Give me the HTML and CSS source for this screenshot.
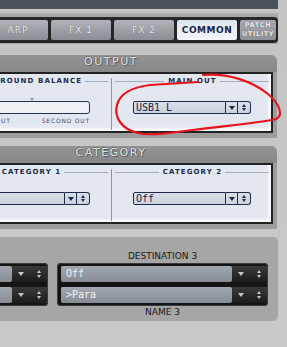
FILE: index.html
```html
<!DOCTYPE html>
<html>
<head>
<meta charset="utf-8">
<link rel="stylesheet" href="styles.css">
</head>
<body>
<div class="page">
  <div class="topbar"></div>
  <div class="tabstrip">
    <div class="tabs">
      <div class="tab">ARP</div>
      <div class="tab">FX 1</div>
      <div class="tab">FX 2</div>
      <div class="tab active">COMMON</div>
      <div class="tab util"><span>PATCH</span><span>UTILITY</span></div>
    </div>
  </div>

  <section class="frame">
    <div class="frame-head">OUTPUT</div>
    <div class="panel">
      <div class="sub sub-left">
        <div class="legend"><span>SURROUND BALANCE</span></div>
        <div class="slider"><i class="marker"></i></div>
        <div class="slider-labels"><span>FIRST OUT</span><span>SECOND OUT</span></div>
      </div>
      <div class="divider"></div>
      <div class="sub sub-right">
        <div class="legend"><span>MAIN OUT</span></div>
        <div class="select">
          <div class="select-value">USB1 L</div>
          <div class="select-btn"><i class="tri-down"></i></div>
          <div class="select-btn spin"><i class="tri-up-s"></i><i class="tri-down-s"></i></div>
        </div>
      </div>
    </div>
  </section>

  <section class="frame">
    <div class="frame-head">CATEGORY</div>
    <div class="panel">
      <div class="sub sub-left cat">
        <div class="legend"><span>CATEGORY 1</span></div>
        <div class="select">
          <div class="select-value">Off</div>
          <div class="select-btn"><i class="tri-down"></i></div>
          <div class="select-btn spin"><i class="tri-up-s"></i><i class="tri-down-s"></i></div>
        </div>
      </div>
      <div class="divider"></div>
      <div class="sub sub-right">
        <div class="legend"><span>CATEGORY 2</span></div>
        <div class="select">
          <div class="select-value">Off</div>
          <div class="select-btn"><i class="tri-down"></i></div>
          <div class="select-btn spin"><i class="tri-up-s"></i><i class="tri-down-s"></i></div>
        </div>
      </div>
    </div>
  </section>

  <section class="dest">
    <div class="dest-col">
      <div class="dest-label">DESTINATION 2</div>
      <div class="group">
        <div class="row"><div class="row-fill">Off</div><div class="row-arrow"><i class="g-down"></i></div><div class="row-spin"><i class="g-up-s"></i><i class="g-down-s"></i></div></div>
        <div class="row"><div class="row-fill">&gt;Para</div><div class="row-arrow"><i class="g-down"></i></div><div class="row-spin"><i class="g-up-s"></i><i class="g-down-s"></i></div></div>
      </div>
      <div class="dest-label">NAME 2</div>
    </div>
    <div class="dest-col">
      <div class="dest-label">DESTINATION 3</div>
      <div class="group">
        <div class="row"><div class="row-fill">Off</div><div class="row-arrow"><i class="g-down"></i></div><div class="row-spin"><i class="g-up-s"></i><i class="g-down-s"></i></div></div>
        <div class="row"><div class="row-fill">&gt;Para</div><div class="row-arrow"><i class="g-down"></i></div><div class="row-spin"><i class="g-up-s"></i><i class="g-down-s"></i></div></div>
      </div>
      <div class="dest-label">NAME 3</div>
    </div>
  </section>
</div>

<svg class="annot" width="287" height="347" viewBox="0 0 287 347">
  <path d="M203 75 C228 73 252 81 268 94 C281 105 283 116 276 119 C260 123 222 126 192 130 C170 133 150 136 138 133 C121 129 114 117 117 105 C120 93 134 87 150 85 L198 82" fill="none" stroke="#e8141a" stroke-width="2.2" stroke-linecap="round" stroke-linejoin="round"/>
</svg>
</body>
</html>
```

FILE: styles.css
```css
* { box-sizing: border-box; margin: 0; padding: 0; }
html, body { width: 287px; height: 347px; overflow: hidden; }
body {
  position: relative;
  background: linear-gradient(#c4c4c4, #c9c9c9);
  font-family: "DejaVu Sans", sans-serif;
}
.page { margin-left: -55px; width: 333px; }

.topbar { height: 9px; background: #4b5259; }
.tabstrip {
  height: 35px;
  padding-top: 8px;
  background: linear-gradient(#c8c8c8 0, #c0c0c0 4px, #a8a8a8 5px, #a6a6a6 100%);
  display: flex;
}
.tabs {
  margin-left: 40px;
  height: 26px;
  display: flex;
  gap: 3px;
  padding: 3px 2px 3px 3px;
  background: #262626;
  border-radius: 4px;
}
.tab {
  width: 60px;
  height: 20px;
  border-radius: 2px;
  background: linear-gradient(#b0b4b9, #8a8e94);
  color: #ededed;
  font-size: 9px;
  letter-spacing: 1px;
  line-height: 20px;
  text-align: center;
  text-shadow: 0 0 1px #4a4e54;
}
.tab.active {
  background: linear-gradient(#dfe5ef, #f3f6fb);
  color: #17244a;
  letter-spacing: 0.5px;
  text-shadow: none;
  font-weight: bold;
}
.tab.util {
  width: 36px;
  display: flex;
  flex-direction: column;
  align-items: center;
  justify-content: center;
  font-size: 6.5px;
  font-weight: bold;
  letter-spacing: 0.6px;
  line-height: 9px;
  background: linear-gradient(#a6aab0, #8e9298);
}

.frame {
  margin-top: 11px;
  width: 332px;
  background: #9d9d9d;
  border-radius: 0 6px 0 0;
  padding: 0 4px 5px;
}
.frame + .frame { margin-top: 8px; }
.frame-head {
  height: 17px;
  margin: 0 -4px;
  background: linear-gradient(#939393, #878787);
  border-radius: 0 6px 0 0;
  color: #e0e0e0;
  font-size: 11px;
  line-height: 13px;
  letter-spacing: 1.5px;
  text-align: center;
  text-shadow: 1px 1px 0 #5e5e5e, -1px 0 0 #747474, 0 -1px 0 #777;
}
.panel {
  height: 61px;
  border: 2px solid #222;
  background: #e3e7ef;
  box-shadow: inset -3px -3px 2px #f6f8fc;
  display: flex;
}
.sub { padding-top: 3px; }
.sub-left { width: 160px; padding-left: 21px; padding-right: 21px; }
.sub-right { width: 159px; padding-left: 21px; padding-right: 20px; }
.divider { width: 1px; margin: 4px 0 1px; background: #8c96a8; }

.legend {
  height: 8px;
  display: flex;
  align-items: center;
  margin: 0 -18px 0 -18px;
  font-size: 7px;
  font-weight: bold;
  letter-spacing: 1.1px;
  line-height: 8px;
  color: #1c2a48;
}
.legend::before, .legend::after {
  content: "";
  flex: 1;
  height: 1px;
  background: #a3acbb;
}
.legend span { padding: 0 3px 0 4px; }

.slider {
  position: relative;
  margin-top: 16px;
  height: 13px;
  border: 1px solid #24334f;
  border-radius: 3px;
  background: #eef1f6;
}
.marker {
  position: absolute;
  left: 57px;
  top: -4px;
  border-left: 2.5px solid transparent;
  border-right: 2.5px solid transparent;
  border-top: 3px solid #8a96aa;
}
.slider-labels {
  margin-top: 3px;
  display: flex;
  justify-content: space-between;
  font-size: 6px;
  letter-spacing: 0.8px;
  line-height: 8px;
  color: #3c4a66;
}

.select {
  margin-top: 16px;
  height: 13px;
  display: flex;
}
.select-value, .select-btn {
  border: 1px solid #1e2c4c;
  background: linear-gradient(#d9dee7, #cdd3dd);
}
.select-value {
  flex: 1;
  border-radius: 2px 0 0 2px;
  padding-left: 2px;
  font-family: "DejaVu Sans Mono", monospace;
  font-size: 10px;
  line-height: 11px;
  color: #17244a;
}
.select-btn {
  width: 12px;
  border-left: none;
  display: flex;
  flex-direction: column;
  align-items: center;
  justify-content: center;
}
.select-btn.spin { width: 13px; border-radius: 0 3px 3px 0; gap: 1px; }
.tri-down {
  border-left: 3.5px solid transparent;
  border-right: 3.5px solid transparent;
  border-top: 4px solid #1c2a4a;
}
.tri-up-s, .tri-down-s {
  border-left: 2.5px solid transparent;
  border-right: 2.5px solid transparent;
}
.tri-up-s { border-bottom: 3px solid #1c2a4a; }
.tri-down-s { border-top: 3px solid #1c2a4a; }

.dest {
  margin-top: 8px;
  width: 333px;
  height: 84px;
  background: #a6a6a6;
  border-radius: 0 5px 5px 0;
  padding: 14px 10px 0 0;
  display: flex;
  justify-content: flex-end;
  gap: 9px;
}
.dest-col { flex: none; width: 211px; }
.dest-label {
  height: 11px;
  font-size: 9px;
  line-height: 11px;
  text-align: center;
  color: #1a1a1a;
}
.group {
  margin: 1px 0;
  height: 43px;
  border-radius: 4px;
  background: #141414;
  padding: 3px 0 3px 4px;
  display: flex;
  flex-direction: column;
  gap: 5px;
  box-shadow: inset 0 0 0 1px #3a3a3a;
}
.row {
  height: 16px;
  display: flex;
  background: linear-gradient(#3a3a3a, #1c1c1c);
  margin-right: 1px;
}
.row-fill {
  width: 171px;
  border-radius: 2px;
  background: linear-gradient(#a2a8b0, #868c94);
  padding-left: 5px;
  font-family: "DejaVu Sans Mono", monospace;
  font-size: 10px;
  line-height: 16px;
  color: #f2f2f2;
}
.row-arrow, .row-spin {
  display: flex;
  flex-direction: column;
  align-items: center;
  justify-content: center;
}
.row-arrow { width: 18px; }
.row-spin { width: 17px; gap: 2px; }
.g-down {
  border-left: 3.5px solid transparent;
  border-right: 3.5px solid transparent;
  border-top: 4px solid #c8c8c8;
}
.g-up-s, .g-down-s {
  border-left: 2.5px solid transparent;
  border-right: 2.5px solid transparent;
}
.g-up-s { border-bottom: 3px solid #c8c8c8; }
.g-down-s { border-top: 3px solid #c8c8c8; }

.annot { position: absolute; left: 0; top: 0; pointer-events: none; }
```
